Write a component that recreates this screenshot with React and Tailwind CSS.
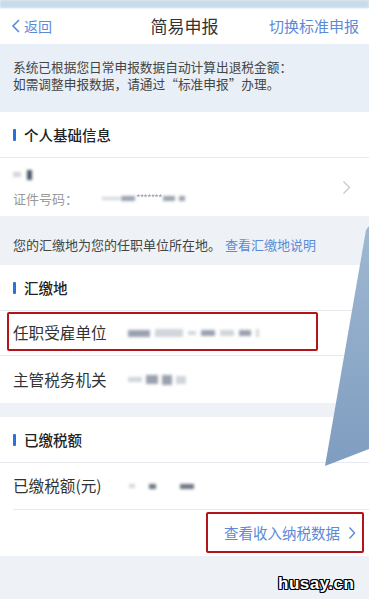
import React from "react";

const font = { fontFamily: '"Noto Sans CJK SC", "Noto Sans", sans-serif' };

function Blur({ w, h = 6, c = "bg-gray-400", className = "" }) {
  return <span className={`inline-block ${c} blur-[1.5px] ${className}`} style={{ width: w, height: h }} />;
}

function SectionTitle({ children }) {
  return (
    <div className="h-[46px] flex items-center gap-[8px] px-[13px] border-b border-[#e6e9ee]">
      <span className="w-[3px] h-[12px] bg-[#2d6fd8] rounded-[1px]" />
      <span className="text-[14.5px] text-[#222] font-medium">{children}</span>
    </div>
  );
}

export default function App() {
  return (
    <div className="relative w-[369px] h-[599px] overflow-hidden bg-[#eef2f6]" style={font}>
      <div className="h-[8px] bg-[#c9dbe9] blur-[1px]" />

      <div className="h-[36px] bg-white flex items-center justify-between px-[10px]">
        <div className="flex items-center text-[#5b8ad6] text-[14px] gap-[2px] w-[90px]">
          <svg width="12" height="16" viewBox="0 0 12 16" fill="none" stroke="#5b8ad6" strokeWidth="1.6">
            <path d="M9 2 L3 8 L9 14" />
          </svg>
          返回
        </div>
        <div className="text-[17px] text-[#333]">简易申报</div>
        <div className="text-[15px] text-[#5b8ad6] w-[90px] text-right whitespace-nowrap">切换标准申报</div>
      </div>

      <div className="h-[68px] bg-[#e8eff6] px-[13px] pt-[14px] text-[12.7px] leading-[17px] text-[#444]">
        <div className="whitespace-nowrap">系统已根据您日常申报数据自动计算出退税金额：</div>
        <div className="whitespace-nowrap">如需调整申报数据，请通过“标准申报”办理。</div>
      </div>

      <div className="bg-white">
        <SectionTitle>个人基础信息</SectionTitle>
        <div className="h-[58px] flex items-center justify-between pl-[13px] pr-[18px]">
          <div className="flex flex-col gap-[12px]">
            <div className="flex items-center gap-[6px]">
              <Blur w={8} h={5} c="bg-gray-300" />
              <Blur w={5} h={10} c="bg-gray-600" />
            </div>
            <div className="flex items-center text-[13px] text-[#999] leading-none">
              证件号码：
              <span className="ml-[24px] flex items-center gap-[1px]">
                <Blur w={18} h={3} c="bg-gray-300" />
                <Blur w={14} h={5} c="bg-gray-400" />
                <span className="text-[10px] text-gray-400 tracking-[-1px] blur-[0.5px]">*******</span>
                <Blur w={12} h={5} c="bg-gray-400" />
                <Blur w={6} h={5} c="bg-gray-400" className="ml-[3px]" />
              </span>
            </div>
          </div>
          <svg width="9" height="15" viewBox="0 0 9 15" fill="none" stroke="#c4c8ce" strokeWidth="1.3">
            <path d="M1.5 1.5 L7.5 7.5 L1.5 13.5" />
          </svg>
        </div>
      </div>

      <div className="h-[49px] bg-[#eef2f6] px-[13px] pt-[21px] text-[13px] text-[#444] leading-[16px]">
        您的汇缴地为您的任职单位所在地。
        <span className="text-[#5b8ad6] ml-[4px]">查看汇缴地说明</span>
      </div>

      <div className="bg-white">
        <SectionTitle>汇缴地</SectionTitle>
        <div className="h-[45px] flex items-center border-b border-[#e6e9ee] relative">
          <div className="absolute left-[7px] top-[1px] w-[311px] h-[39px] border-[2.5px] border-[#b3141a] rounded-[2px]" />
          <span className="pl-[13px] text-[15.6px] text-[#333] w-[128px]">任职受雇单位</span>
          <span className="flex items-center gap-[5px]">
            <Blur w={22} h={7} c="bg-gray-400" />
            <Blur w={28} h={8} c="bg-gray-300" />
            <Blur w={8} h={4} c="bg-gray-300" />
            <Blur w={14} h={6} c="bg-gray-400" />
            <Blur w={14} h={6} c="bg-gray-300" />
            <Blur w={12} h={6} c="bg-gray-400" />
            <Blur w={3} h={8} c="bg-gray-300" />
          </span>
        </div>
        <div className="h-[47px] flex items-center">
          <span className="pl-[13px] text-[15.6px] text-[#333] w-[128px]">主管税务机关</span>
          <span className="flex items-center gap-[4px]">
            <Blur w={14} h={5} c="bg-gray-300" />
            <Blur w={12} h={9} c="bg-gray-400" />
            <Blur w={10} h={10} c="bg-gray-400" />
            <Blur w={10} h={8} c="bg-gray-300" />
          </span>
        </div>
      </div>

      <div className="h-[14px]" />

      <div className="bg-white">
        <SectionTitle>已缴税额</SectionTitle>
        <div className="ml-[13px] h-[47px] flex items-center border-b border-[#e6e9ee]">
          <span className="text-[15.6px] text-[#333] w-[116px]">已缴税额(元)</span>
          <span className="flex items-center gap-[14px]">
            <Blur w={6} h={4} c="bg-gray-300" />
            <Blur w={7} h={5} c="bg-gray-500" />
            <Blur w={14} h={5} c="bg-gray-500" className="ml-[10px]" />
          </span>
        </div>
        <div className="h-[46px] flex items-center justify-end pr-[13px] relative">
          <div className="absolute left-[206px] top-[2px] w-[158px] h-[41px] border-[2.5px] border-[#b3141a] rounded-[2px]" />
          <span className="text-[14.5px] text-[#5b8ad6] flex items-center gap-[8px]">
            查看收入纳税数据
            <svg width="8" height="14" viewBox="0 0 8 14" fill="none" stroke="#5b8ad6" strokeWidth="1.4">
              <path d="M1.5 1.5 L6.5 7 L1.5 12.5" />
            </svg>
          </span>
        </div>
      </div>

      <svg className="absolute left-0 top-0 pointer-events-none" width="369" height="599" viewBox="0 0 369 599">
        <defs>
          <linearGradient id="wg" x1="0" y1="0" x2="0" y2="1">
            <stop offset="0" stopColor="#9fb8d2" />
            <stop offset="1" stopColor="#7f9dc0" />
          </linearGradient>
        </defs>
        <polygon points="366,230 369,226 369,449 325,466" fill="url(#wg)" />
      </svg>

      <div
        className="absolute left-[278px] top-[571px] text-[17px] font-bold text-white tracking-[0.5px] [text-shadow:-1px_-1px_0_#000,1px_-1px_0_#000,-1px_1px_0_#000,1px_1px_0_#000,0_1px_0_#000,0_-1px_0_#000,1px_0_0_#000,-1px_0_0_#000]"
        style={{ fontFamily: '"Liberation Sans", Arial, sans-serif' }}
      >
        husay.cn
      </div>
    </div>
  );
}
